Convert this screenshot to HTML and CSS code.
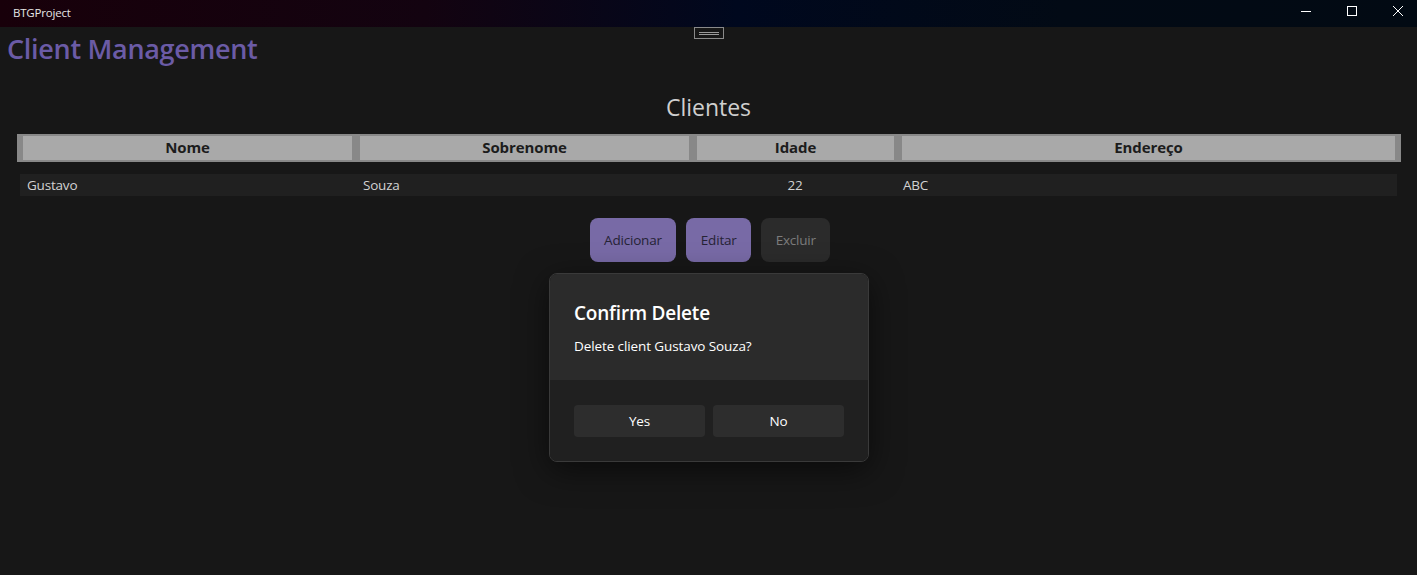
FILE: index.html
```html
<!DOCTYPE html>
<html lang="pt">
<head>
<meta charset="utf-8">
<title>BTGProject</title>
<link rel="stylesheet" href="styles.css">
</head>
<body>
<div class="window">
  <header class="titlebar">
    <span class="app-name">BTGProject</span>
    <div class="controls">
      <span class="ctl">
        <svg width="12" height="12" viewBox="0 0 12 12"><path d="M1 6.5h10" stroke="#fff" stroke-width="1"/></svg>
      </span>
      <span class="ctl">
        <svg width="12" height="12" viewBox="0 0 12 12"><rect x="1.5" y="1.5" width="9" height="9" fill="none" stroke="#fff" stroke-width="1"/></svg>
      </span>
      <span class="ctl">
        <svg width="12" height="12" viewBox="0 0 12 12"><path d="M1 1l10 10M11 1L1 11" stroke="#fff" stroke-width="1"/></svg>
      </span>
    </div>
  </header>

  <div class="debug-handle"><span></span><span></span></div>

  <main class="content">
    <h1 class="app-title">Client Management</h1>
    <h2 class="section-title">Clientes</h2>

    <div class="grid-header">
      <div class="hcell">Nome</div>
      <div class="hcell">Sobrenome</div>
      <div class="hcell">Idade</div>
      <div class="hcell">Endereço</div>
    </div>

    <div class="grid-row">
      <div class="cell">Gustavo</div>
      <div class="cell">Souza</div>
      <div class="cell center">22</div>
      <div class="cell">ABC</div>
    </div>

    <div class="actions">
      <button class="btn primary">Adicionar</button>
      <button class="btn primary">Editar</button>
      <button class="btn disabled">Excluir</button>
    </div>
  </main>

  <div class="dialog">
    <div class="dialog-body">
      <div class="dialog-title">Confirm Delete</div>
      <div class="dialog-text">Delete client Gustavo Souza?</div>
    </div>
    <div class="dialog-footer">
      <button class="dbtn">Yes</button>
      <button class="dbtn">No</button>
    </div>
  </div>
</div>
</body>
</html>
```

FILE: styles.css
```css
* { box-sizing: border-box; }

html, body {
  margin: 0;
  padding: 0;
  width: 1417px;
  height: 575px;
  overflow: hidden;
  background: #171717;
  font-family: "Open Sans", "Noto Sans", sans-serif;
}

.window {
  position: relative;
  width: 1417px;
  height: 575px;
  background: #171717;
}

.titlebar {
  height: 27px;
  display: flex;
  align-items: center;
  justify-content: space-between;
  background: linear-gradient(90deg, #18000a 0%, #130310 30%, #00081e 52%, #020a15 75%, #020a13 100%);
}

.app-name {
  padding-left: 13px;
  padding-bottom: 3px;
  font-size: 11.5px;
  color: #e6e6e6;
  letter-spacing: -0.2px;
}

.controls {
  display: flex;
  height: 100%;
  margin-right: -4px;
}

.ctl {
  width: 46px;
  height: 100%;
  display: flex;
  align-items: center;
  justify-content: center;
  padding-bottom: 5px;
}

.debug-handle {
  position: absolute;
  left: 694px;
  top: 27px;
  width: 30px;
  height: 12px;
  border: 1px solid #8a8a8a;
  display: flex;
  flex-direction: column;
  align-items: center;
  justify-content: center;
  gap: 1px;
}

.debug-handle span {
  display: block;
  width: 20px;
  height: 1px;
  background: #9a9a9a;
}

.content {
  padding: 0;
}

.app-title {
  margin: 0;
  padding: 5px 0 0 7px;
  height: 40px;
  font-size: 27px;
  font-weight: 600;
  color: #6b5ba6;
  line-height: 34px;
  letter-spacing: -0.3px;
}

.section-title {
  margin: 0;
  padding-top: 24px;
  text-align: center;
  font-size: 23px;
  font-weight: 400;
  line-height: 32px;
  color: #cfcfcf;
  height: 67px;
}

.grid-header {
  margin: 0 16px 0 17px;
  padding: 2px 6px;
  background: #888888;
  display: grid;
  grid-template-columns: 329px 329px 197px 493px;
  column-gap: 8px;
  height: 28px;
}

.hcell {
  background: #a9a9a9;
  color: #1c1c1c;
  font-weight: 700;
  font-size: 15px;
  display: flex;
  align-items: center;
  justify-content: center;
  letter-spacing: -0.1px;
  padding-bottom: 2px;
}

.grid-row {
  margin: 12px 20px 0 20px;
  height: 22px;
  background: #202020;
  display: grid;
  grid-template-columns: 336px 334px 206px 1fr;
  padding-left: 7px;
  align-items: center;
}

.cell {
  font-size: 13.5px;
  color: #d2d2d2;
  letter-spacing: -0.2px;
}

.cell.center {
  text-align: center;
  padding-right: 10px;
}

.actions {
  margin-top: 22px;
  display: flex;
  justify-content: center;
  gap: 10px;
  padding-left: 3px;
}

.btn {
  height: 44px;
  border: none;
  border-radius: 8px;
  font-family: inherit;
  font-size: 13.5px;
  padding: 0 14.5px;
  letter-spacing: -0.2px;
}

.btn.primary {
  background: #786aa6;
  color: #262335;
}

.btn.disabled {
  background: #2b2b2b;
  color: #7c7c7c;
}

.dialog {
  position: absolute;
  left: 549px;
  top: 273px;
  width: 320px;
  height: 189px;
  border: 1px solid #3a3a3a;
  border-radius: 8px;
  overflow: hidden;
  box-shadow: 0 8px 32px rgba(0, 0, 0, 0.55);
  display: flex;
  flex-direction: column;
}

.dialog-body {
  background: #2b2b2b;
  height: 106px;
  padding: 26px 24px 0 24px;
}

.dialog-title {
  font-size: 19px;
  font-weight: 600;
  color: #ffffff;
  line-height: 26px;
  letter-spacing: -0.2px;
}

.dialog-text {
  margin-top: 10px;
  font-size: 13.5px;
  color: #ffffff;
  line-height: 20px;
  letter-spacing: -0.1px;
}

.dialog-footer {
  flex: 1;
  background: #202020;
  padding: 25px 24px 0 24px;
  display: flex;
  gap: 8px;
}

.dbtn {
  flex: 1;
  height: 32px;
  border: none;
  border-radius: 4px;
  background: #2d2d2d;
  color: #ffffff;
  font-family: inherit;
  font-size: 13.5px;
  letter-spacing: -0.2px;
}
```
